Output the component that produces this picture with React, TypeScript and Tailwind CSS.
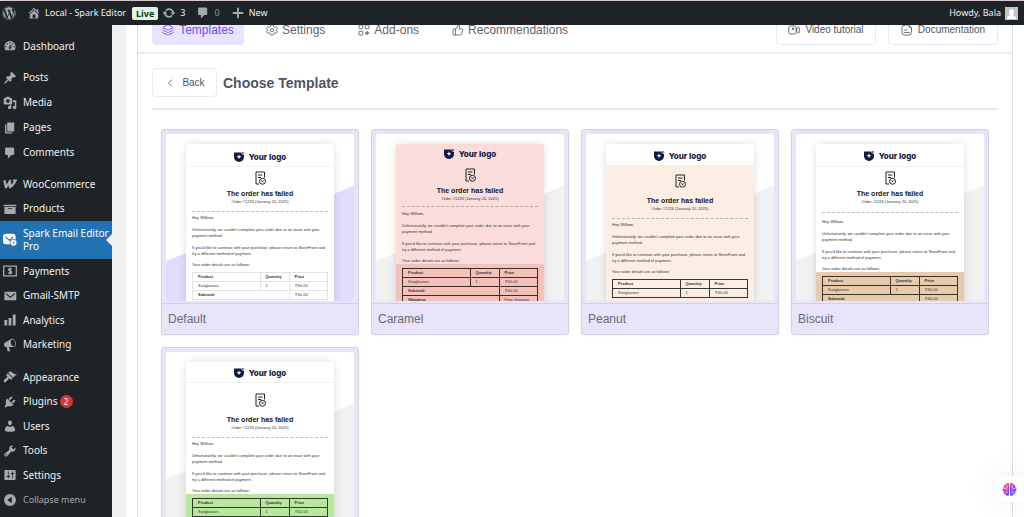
import { ReactNode } from "react";
import { ChevronLeft, Layers, ThumbsUp } from "lucide-react";
import { FaWordpress } from "react-icons/fa";

const paths = {
  dashboard:
    "M3.76 16h12.48c1.1-1.37 1.76-3.11 1.76-5 0-4.42-3.58-8-8-8s-8 3.58-8 8c0 1.89.66 3.63 1.76 5zM10 4c.55 0 1 .45 1 1s-.45 1-1 1-1-.45-1-1 .45-1 1-1zM6 6c.55 0 1 .45 1 1s-.45 1-1 1-1-.45-1-1 .45-1 1-1zm8 0c.55 0 1 .45 1 1s-.45 1-1 1-1-.45-1-1 .45-1 1-1zm-5.37 5.55L12 7v6c0 1.1-.9 2-2 2s-2-.9-2-2c0-.57.24-1.08.63-1.45zM4 10c.55 0 1 .45 1 1s-.45 1-1 1-1-.45-1-1 .45-1 1-1zm12 0c.55 0 1 .45 1 1s-.45 1-1 1-1-.45-1-1 .45-1 1-1zm-5 3c0-.55-.45-1-1-1s-1 .45-1 1 .45 1 1 1 1-.45 1-1z",
  pin: "M10.44 3.02l1.82-1.82 6.36 6.35-1.83 1.82c-1.05-.68-2.48-.57-3.41.36l-.75.75c-.92.93-1.04 2.35-.35 3.41l-1.83 1.82-2.41-2.41-2.8 2.79c-.42.42-3.38 2.71-3.8 2.29s1.86-3.39 2.28-3.81l2.79-2.79L4.1 9.36l1.83-1.82c1.05.69 2.48.57 3.4-.36l.75-.75c.93-.92 1.05-2.35.36-3.41z",
  media:
    "M13 11V4c0-.55-.45-1-1-1h-1.67L9 1H5L3.67 3H2c-.55 0-1 .45-1 1v7c0 .55.45 1 1 1h10c.55 0 1-.45 1-1zM7 4.5c1.38 0 2.5 1.12 2.5 2.5S8.38 9.5 7 9.5 4.5 8.38 4.5 7 5.62 4.5 7 4.5zM14 6h5v10.5c0 1.38-1.12 2.5-2.5 2.5S14 17.88 14 16.5s1.12-2.5 2.5-2.5c.17 0 .34.02.5.05V9h-3V6zm-4 8.05V13h2v3.5c0 1.38-1.12 2.5-2.5 2.5S7 17.88 7 16.5 8.12 14 9.5 14c.17 0 .34.02.5.05z",
  page: "M6 15V2h10v13H6zm-1 1h8v2H3V5h2v11z",
  comment:
    "M5 2h9c1.1 0 2 .9 2 2v7c0 1.1-.9 2-2 2h-2l-5 5v-5H5c-1.1 0-2-.9-2-2V4c0-1.1.9-2 2-2z",
  archive: "M19 4v2H1V4h18zM2 7h16v10H2V7zm11 3V9H7v1h6z",
  email:
    "M19 14.5v-9c0-.83-.67-1.5-1.5-1.5H3.49c-.83 0-1.5.67-1.5 1.5v9c0 .83.67 1.5 1.5 1.5H17.5c.83 0 1.5-.67 1.5-1.5zM4 5.6l6.5 5.2L17 5.6v2l-6.5 5.2L4 7.6z",
  chart: "M18 18V2h-4v16h4zm-6 0V7H8v11h4zm-6 0v-8H2v8h4z",
  megaphone:
    "M18.15 5.94c.46 1.62.38 3.22-.02 4.48-.42 1.28-1.26 2.18-2.3 2.48-.16.06-.26.06-.4.06-.06.02-.12.02-.18.02-.06.02-.14.02-.22.02h-6.8l2.22 5.5c.02.14-.06.26-.14.34-.08.1-.24.16-.34.16H6.95c-.1 0-.26-.06-.34-.16-.08-.08-.16-.2-.14-.34l-1-5.5H4.25l-.02-.02c-.5.06-1.08-.18-1.54-.62s-.88-1.08-1.06-1.88c-.24-.8-.2-1.56-.02-2.2.18-.62.58-1.08 1.06-1.3l.02-.02 9-5.4c.1-.06.18-.1.24-.16.06-.04.14-.08.24-.12.16-.08.28-.12.5-.18 1.04-.3 2.24.1 3.22.98s1.84 2.24 2.26 3.86zm-2.58 5.98h-.02c.4-.1.74-.34 1.04-.7.58-.7.86-1.76.86-3.04 0-.64-.1-1.3-.28-1.98-.34-1.36-1.02-2.5-1.78-3.24s-1.68-1.1-2.46-.88c-.82.22-1.4.96-1.7 2-.32 1.04-.28 2.36.06 3.72.38 1.36 1 2.5 1.8 3.24.78.74 1.62 1.1 2.48.88z",
  appearance:
    "M14.48 11.06L7.41 3.99l1.5-1.5c.5-.56 2.3-.47 3.51.32 1.21.8 1.43 1.28 2.91 2.1 1.18.64 2.45 1.26 4.45.85zm-.71.71L6.7 4.7 4.93 6.47c-.39.39-.39 1.02 0 1.41l1.06 1.06c.39.39.39 1.03 0 1.42-.6.6-1.43 1.11-2.21 1.69-.35.26-.7.53-1.01.84C1.43 14.23.4 16.08 1.4 17.07c.99 1 2.84-.03 4.18-1.36.31-.31.58-.66.85-1.02.57-.78 1.08-1.61 1.69-2.21.39-.39 1.02-.39 1.41 0l1.06 1.06c.39.39 1.02.39 1.41 0z",
  plugins:
    "M13.11 4.36L9.87 7.6 8 5.73l3.24-3.24c.35-.34 1.05-.2 1.56.32.52.51.66 1.21.31 1.55zm-8 1.77l.91-1.12 9.01 9.01-1.19.84c-.71.71-2.63 1.16-3.82 1.16H6.14L4.9 17.26c-.59.59-1.54.59-2.12 0-.59-.58-.59-1.53 0-2.12l1.24-1.24v-3.88c0-1.13.4-3.19 1.09-3.89zm7.26 3.97l3.24-3.24c.34-.35 1.04-.21 1.55.31.52.51.66 1.21.31 1.55l-3.24 3.25z",
  users:
    "M10 9.25c-2.27 0-2.73-3.44-2.73-3.44C7 4.02 7.82 2 9.97 2c2.16 0 2.98 2.02 2.71 3.81 0 0-.41 3.44-2.68 3.44zm0 2.57L12.72 10c2.39 0 4.52 2.33 4.52 4.53v2.49s-3.65 1.13-7.24 1.13c-3.65 0-7.24-1.13-7.24-1.13v-2.49c0-2.25 1.94-4.48 4.47-4.48z",
  tools:
    "M16.68 9.77c-1.34 1.34-3.3 1.67-4.95.99l-5.41 6.52c-.99.99-2.59.99-3.58 0s-.99-2.59 0-3.57l6.52-5.42c-.68-1.65-.35-3.61.99-4.95 1.28-1.28 3.12-1.62 4.72-1.06l-2.89 2.89 2.82 2.82 2.86-2.87c.53 1.58.18 3.39-1.08 4.65zM3.81 16.21c.4.39 1.04.39 1.43 0 .4-.4.4-1.04 0-1.43-.39-.4-1.03-.4-1.43 0-.39.39-.39 1.03 0 1.43z",
  settings:
    "M18 16V4c0-.55-.45-1-1-1H3c-.55 0-1 .45-1 1v12c0 .55.45 1 1 1h14c.55 0 1-.45 1-1zM8 11h1c.55 0 1 .45 1 1s-.45 1-1 1H8v1.5c0 .28-.22.5-.5.5s-.5-.22-.5-.5V13H6c-.55 0-1-.45-1-1s.45-1 1-1h1V5.5c0-.28.22-.5.5-.5s.5.22.5.5V11zm5-2h-1c-.55 0-1-.45-1-1s.45-1 1-1h1V5.5c0-.28.22-.5.5-.5s.5.22.5.5V7h1c.55 0 1 .45 1 1s-.45 1-1 1h-1v5.5c0 .28-.22.5-.5.5s-.5-.22-.5-.5V9z",
  collapse: "M10 1.5a8.5 8.5 0 1 0 0 17a8.5 8.5 0 1 0 0-17zM12.5 5.5v9L6 10z",
  home: "M16 8.5l1.53 1.53-1.06 1.06L10 4.6l-6.47 6.49-1.06-1.06L10 2.5l4 4v-2h2v4zm-6-2.46l6 5.99V18H4v-5.97zM12 17v-5H8v5h4z",
  update:
    "M10.2 3.28c3.53 0 6.43 2.61 6.92 6h2.08l-3.5 4-3.5-4h2.32c-.45-1.97-2.21-3.45-4.32-3.45-1.45 0-2.73.71-3.54 1.78L4.95 5.66C6.23 4.2 8.11 3.28 10.2 3.28zm-.4 13.44c-3.52 0-6.43-2.61-6.92-6H.8l3.5-4c1.17 1.33 2.33 2.67 3.5 4H5.48c.45 1.97 2.21 3.45 4.32 3.45 1.45 0 2.73-.71 3.54-1.78l1.71 1.95c-1.28 1.46-3.15 2.38-5.25 2.38z",
  plus: "M17.5 8.7v2.6h-6.2v6.2H8.7v-6.2H2.5V8.7h6.2V2.5h2.6v6.2z",
};

function Dash({ name }: { name: keyof typeof paths }) {
  return (
    <svg viewBox="0 0 20 20" className="size-3.5 shrink-0" fill="currentColor" fillRule="evenodd" aria-hidden="true">
      <path d={paths[name]} />
    </svg>
  );
}

function WooIcon() {
  return (
    <svg viewBox="0 0 20 20" className="size-3.5 shrink-0" fill="none" stroke="currentColor" strokeWidth="3.4" strokeLinejoin="round" aria-hidden="true">
      <path d="M2 4.500L4.200 14.500C6.500 12.500 8.500 9 10 5.500V14.500C13.500 12.500 16 9 18 4.500" />
      <path d="M14 4.500H20" strokeWidth="2" />
    </svg>
  );
}

function SparkIcon() {
  return (
    <svg viewBox="0 0 20 20" className="size-3.5 shrink-0" fill="none" aria-hidden="true">
      <rect x="0" y="1" width="18" height="15" rx="4" fill="#fff" />
      <path d="M4 6l5 4.500 5-4.500" stroke="#2271b1" strokeWidth="1.6" strokeLinecap="round" strokeLinejoin="round" />
      <circle cx="15" cy="14" r="5" fill="#fff" stroke="#2271b1" strokeWidth="1.2" />
      <path d="M16.500 11.500l-3.500 2.600h2l-1 2.400 3.300-3h-2z" fill="#2271b1" />
    </svg>
  );
}

function PaymentsIcon() {
  return (
    <svg viewBox="0 0 20 20" className="size-3.5 shrink-0" fill="none" stroke="currentColor" strokeWidth="1.8" aria-hidden="true">
      <rect x="1" y="3" width="18" height="14" />
      <path d="M12.500 7.500c-1-1.200-4.500-1.200-4.500.6 0 2 4.500 1.500 4.500 3.700 0 1.900-4 1.900-5 .5M10.200 5v10" />
    </svg>
  );
}

function MenuItem({ icon, label, badge, muted }: { icon: ReactNode; label: string; badge?: string; muted?: boolean }) {
  return (
    <li className="flex">
      <a href="#" className={`flex flex-1 items-center gap-1.5 pl-[3px] ${muted ? "text-[9px] text-[#a7aaad]" : "text-[#f0f0f1]"}`}>
        <span className="text-[#a7aaad]">{icon}</span>
        <span>{label}</span>
        {badge && (
          <span className="-ml-1 flex size-[13px] items-center justify-center rounded-full bg-[#d63638] text-[8px] text-white">
            {badge}
          </span>
        )}
      </a>
    </li>
  );
}

function Sidebar() {
  return (
    <nav aria-label="Admin menu" className="relative w-28 shrink-0 bg-[#1d2327] pt-[9px] font-['Noto_Sans','Open_Sans',sans-serif] text-[10px] leading-[13px]">
      <ul className="grid h-6 auto-rows-fr">
        <MenuItem icon={<Dash name="dashboard" />} label="Dashboard" />
      </ul>
      <ul className="mt-[7px] grid h-[100px] auto-rows-fr">
        <MenuItem icon={<Dash name="pin" />} label="Posts" />
        <MenuItem icon={<Dash name="media" />} label="Media" />
        <MenuItem icon={<Dash name="page" />} label="Pages" />
        <MenuItem icon={<Dash name="comment" />} label="Comments" />
      </ul>
      <ul className="mt-[7px] grid h-[49px] auto-rows-fr">
        <MenuItem icon={<WooIcon />} label="WooCommerce" />
        <MenuItem icon={<Dash name="archive" />} label="Products" />
      </ul>
      <a href="#" aria-current="page" className="relative flex h-[38px] items-center gap-1.5 bg-[#2271b1] pl-[3px] text-white">
        <SparkIcon />
        <span>
          Spark Email Editor
          <br />
          Pro
        </span>
        <span className="absolute top-1/2 right-0 -mt-[6px] border-y-6 border-r-6 border-y-transparent border-r-[#f0f0f1]" />
      </a>
      <ul className="grid h-[98px] auto-rows-fr">
        <MenuItem icon={<PaymentsIcon />} label="Payments" />
        <MenuItem icon={<Dash name="email" />} label="Gmail-SMTP" />
        <MenuItem icon={<Dash name="chart" />} label="Analytics" />
        <MenuItem icon={<Dash name="megaphone" />} label="Marketing" />
      </ul>
      <ul className="mt-2 grid h-[147px] auto-rows-fr">
        <MenuItem icon={<Dash name="appearance" />} label="Appearance" />
        <MenuItem icon={<Dash name="plugins" />} label="Plugins" badge="2" />
        <MenuItem icon={<Dash name="users" />} label="Users" />
        <MenuItem icon={<Dash name="tools" />} label="Tools" />
        <MenuItem icon={<Dash name="settings" />} label="Settings" />
        <MenuItem icon={<Dash name="collapse" />} label="Collapse menu" muted />
      </ul>
    </nav>
  );
}

function TopBar() {
  return (
    <header className="relative z-10 flex h-[25px] shrink-0 items-center border-t border-[#d9c9cd] bg-[#1d2327] pr-1.5 pl-0.5 font-['Noto_Sans','Open_Sans',sans-serif] text-[9px] text-[#f0f0f1]">
      <a href="#" aria-label="WordPress" className="text-[#a7aaad]">
        <FaWordpress className="size-3.5" />
      </a>
      <a href="#" className="ml-[11px] flex items-center gap-1">
        <span className="text-[#a7aaad]"><Dash name="home" /></span>
        Local - Spark Editor
      </a>
      <span className="ml-1.5 rounded-xs bg-[#e6f2e8] px-1 text-[9px] leading-[13px] font-bold text-[#00450c]">Live</span>
      <a href="#" className="ml-1 flex items-center gap-1">
        <span className="text-[#a7aaad]"><Dash name="update" /></span>3
      </a>
      <a href="#" className="ml-[11px] flex items-center gap-1 text-[#8c8f94]">
        <span className="text-[#a7aaad]"><Dash name="comment" /></span>0
      </a>
      <a href="#" className="ml-[11px] flex items-center gap-1">
        <span className="text-[#a7aaad]"><Dash name="plus" /></span>New
      </a>
      <a href="#" className="ml-auto flex items-center gap-1">
        Howdy, Bala
        <svg viewBox="0 0 13 13" className="size-[13px]" aria-hidden="true">
          <rect width="13" height="13" fill="#c3c4c7" />
          <path d="M6.500 2.200c1.700 0 2.700 1.200 2.600 2.900-.1 1.300-.7 2.100-1.200 2.600.2 1 3.100 1 3.300 4.300H1.800c.2-3.300 3.100-3.300 3.300-4.300-.5-.5-1.100-1.300-1.200-2.600-.1-1.700.9-2.900 2.600-2.900z" fill="#fff" />
        </svg>
      </a>
    </header>
  );
}

function GearIcon() {
  return (
    <svg viewBox="0 0 24 24" className="size-3" fill="none" stroke="currentColor" strokeWidth="1.7" strokeLinejoin="round" aria-hidden="true">
      <path d="M9.500 2h5l.8 3 2.200 1.200 3-.8 2.400 4.200-2.200 2.400 2.200 2.400-2.400 4.200-3-.8-2.200 1.200-.8 3h-5l-.8-3-2.200-1.200-3 .8L1.100 14.400 3.300 12 1.100 9.600l2.400-4.200 3 .8L8.700 5z" />
      <circle cx="12" cy="12" r="3.5" />
    </svg>
  );
}

function AddonsIcon() {
  return (
    <svg viewBox="0 0 24 24" className="size-3" fill="none" stroke="currentColor" strokeWidth="1.8" aria-hidden="true">
      <rect x="2" y="2" width="7.500" height="7.500" rx="1" />
      <rect x="14.500" y="2" width="7.500" height="7.500" rx="1" />
      <rect x="2" y="14.500" width="7.500" height="7.500" rx="1" />
      <path d="M18.200 14v8.500M14 18.200h8.500" strokeWidth="2.200" />
    </svg>
  );
}

function VideoIcon() {
  return (
    <svg viewBox="0 0 24 24" className="size-3" fill="none" stroke="currentColor" strokeWidth="1.7" strokeLinejoin="round" aria-hidden="true">
      <rect x="1.500" y="4" width="15" height="16" rx="4" />
      <path d="M16.500 10l4-3.500q2-1 2 1v9q0 2-2 1l-4-3.500z" />
      <circle cx="10" cy="9.500" r="1.600" fill="currentColor" />
    </svg>
  );
}

function DocIcon() {
  return (
    <svg viewBox="0 0 24 24" className="size-3" fill="none" stroke="currentColor" strokeWidth="1.7" strokeLinecap="round" strokeLinejoin="round" aria-hidden="true">
      <path d="M7 2h8l6 6v9q0 5-5 5H7q-5 0-5-5V7q0-5 5-5z" />
      <path d="M15 2q0 6 6 6M7 12h5M7 17h10" />
    </svg>
  );
}

function TabBar() {
  return (
    <div className="-mt-[10px] flex items-center justify-between border-b-2 border-[#ececee] px-[14px] pb-[7px] text-xs text-[#5f6470]">
      <div className="flex">
        <button type="button" className="flex h-[30px] w-[92px] items-center justify-center gap-[5px] rounded-sm bg-[#e9e4fd] text-[#6f4ff2]">
          <Layers className="size-3" strokeWidth={1.7} />
          Templates
        </button>
        <button type="button" className="ml-[22px] flex h-[30px] items-center gap-1">
          <GearIcon />
          Settings
        </button>
        <button type="button" className="ml-[33px] flex h-[30px] items-center gap-1">
          <AddonsIcon />
          Add-ons
        </button>
        <button type="button" className="ml-[33px] flex h-[30px] items-center gap-1">
          <ThumbsUp className="size-3" strokeWidth={1.7} />
          Recommendations
        </button>
      </div>
      <div className="flex gap-3 text-[10px] text-[#50555f]">
        <button type="button" className="flex h-[30px] w-[100px] items-center justify-center gap-[5px] rounded-sm border border-[#e6eaf3]">
          <VideoIcon />
          Video tutorial
        </button>
        <button type="button" className="flex h-[30px] w-[110px] items-center justify-center gap-[5px] rounded-sm border border-[#e6eaf3]">
          <DocIcon />
          Documentation
        </button>
      </div>
    </div>
  );
}

type Theme = {
  name: string;
  shape: string;
  paper: string;
  header: string;
  icon: string;
  title: string;
  rule: string;
  body: string;
  order: string;
  line: string;
  summaryRows: number;
};

const themes: Theme[] = [
  { name: "Default", shape: "#e2dcfd", paper: "bg-white", header: "h-[23px] pt-1 border-b border-[#f3f3f3]", icon: "mt-1", title: "mt-1", rule: "mt-[6px]", body: "pt-[3px]", order: "bg-white pt-1", line: "border-[#e3e3e3]", summaryRows: 1 },
  { name: "Caramel", shape: "#f1f1f1", paper: "bg-[#fbdedb]", header: "h-5", icon: "mt-1", title: "mt-1", rule: "mt-1", body: "pt-1", order: "bg-[#f3c0ba] pt-1", line: "border-[#3b2c2a]", summaryRows: 2 },
  { name: "Peanut", shape: "#f1f1f1", paper: "bg-[#fceee3]", header: "h-[21px] bg-white pt-0.5", icon: "mt-[9px]", title: "mt-2", rule: "mt-[6px]", body: "pt-[3px]", order: "bg-[#fceee3] pt-1", line: "border-[#3a3632]", summaryRows: 0 },
  { name: "Biscuit", shape: "#f1f1f1", paper: "bg-white", header: "h-[23px] pt-0.5 border-b border-[#f0f0f0]", icon: "mt-1", title: "mt-1", rule: "mt-[7px]", body: "pt-[6px]", order: "bg-[#e8cbad] pt-1", line: "border-[#3a3128]", summaryRows: 1 },
  { name: "Pistachio", shape: "#f1f1f1", paper: "bg-white", header: "h-[21px] pt-px border-b border-[#f0f0f0]", icon: "mt-[10px]", title: "mt-2", rule: "mt-[6px]", body: "pt-[3px]", order: "bg-[#b9e79e] pt-1", line: "border-[#2f3a29]", summaryRows: 0 },
];

const summary = [
  { label: "Subtotal:", value: "₹ 60.00" },
  { label: "Shipping:", value: "Free shipping" },
];

function BrandMark() {
  return (
    <svg viewBox="0 0 22 20" className="h-[10px] w-[11px]" aria-hidden="true">
      <path d="M0 1h14q1 4 6 5v4a10 10 0 0 1-20 0z" fill="#101b42" />
      <path d="M17.500 0v4M15.500 2h5" stroke="#101b42" strokeWidth="1.3" />
      <path d="M10 4.500l1.300 3.700 3.700 1.300-3.700 1.300L10 14.500l-1.300-3.700L5 9.500l3.700-1.300z" fill="#fff" />
    </svg>
  );
}

function ReceiptIcon() {
  return (
    <svg viewBox="0 0 22 28" className="h-3.5 w-[11px]" fill="none" stroke="#222" strokeWidth="2" aria-hidden="true">
      <path d="M8 26H2V2h17v11M6 8h9M6 13h6" />
      <circle cx="15" cy="20.500" r="6" />
      <path d="M13 18.500l4 4M17 18.500l-4 4" strokeWidth="1.6" />
    </svg>
  );
}

function EmailPreview({ theme }: { theme: Theme }) {
  const cell = `border ${theme.line} h-[9px] px-[5px] py-0 text-left leading-[6px]`;
  return (
    <div className={`relative mx-5 mt-[10px] h-[170px] rounded-xs text-[4px] leading-[6px] text-[#333] shadow-[0_0_8px_rgba(0,0,0,0.13)] ${theme.paper}`}>
      <div className={`flex items-center justify-center gap-1 rounded-t-xs ${theme.header}`}>
        <BrandMark />
        <span className="font-[Inter,sans-serif] text-[8px] leading-[10px] font-extrabold text-[#101b42]">Your logo</span>
      </div>
      <div className={`flex justify-center ${theme.icon}`}>
        <ReceiptIcon />
      </div>
      <div className={`text-center text-[7px] leading-[10px] font-bold text-[#151515] ${theme.title}`}>The order has failed</div>
      <div className="text-center">Order #1226 (January 20, 2025)</div>
      <div className={`mx-[6px] border-t border-dashed border-black/25 ${theme.rule}`} />
      <div className={`px-[6px] whitespace-nowrap ${theme.body}`}>
        <p>Hey William,</p>
        <p className="mt-[6px]">
          Unfortunately, we couldn't complete your order due to an issue with your
          <br />
          payment method.
        </p>
        <p className="mt-[6px]">
          If you'd like to continue with your purchase, please return to StoreFront and
          <br />
          try a different method of payment.
        </p>
        <p className="mt-[5px]">Your order details are as follows:</p>
      </div>
      <div className={`px-[6px] pb-3 ${theme.order}`}>
        <table className="w-full table-fixed border-collapse">
          <colgroup>
            <col className="w-1/2" />
            <col className="w-[29px]" />
            <col />
          </colgroup>
          <thead>
            <tr>
              <th className={cell}>Product</th>
              <th className={cell}>Quantity</th>
              <th className={cell}>Price</th>
            </tr>
          </thead>
          <tbody>
            <tr>
              <td className={cell}>Sunglasses</td>
              <td className={cell}>1</td>
              <td className={cell}>₹ 60.00</td>
            </tr>
            {summary.slice(0, theme.summaryRows).map((row) => (
              <tr key={row.label}>
                <th className={cell} colSpan={2}>{row.label}</th>
                <td className={cell}>{row.value}</td>
              </tr>
            ))}
          </tbody>
        </table>
      </div>
    </div>
  );
}

function TemplateCard({ theme }: { theme: Theme }) {
  return (
    <button type="button" className="block rounded-[3px] border border-[#d3d3dc] bg-[#e9e4fb] text-left shadow-xs">
      <div className="p-1 pb-0.5">
        <div className="relative h-[167px] overflow-hidden rounded-[3px] bg-white">
          <svg viewBox="0 0 100 100" preserveAspectRatio="none" className="absolute inset-0 h-full w-full" aria-hidden="true">
            <path d="M0 76L100 31V100H0z" fill={theme.shape} />
          </svg>
          <EmailPreview theme={theme} />
        </div>
      </div>
      <div className="border-t border-[#d3d3dc] px-[6px] py-[7px] text-xs leading-4 text-[#666b76]">{theme.name}</div>
    </button>
  );
}

function BrainButton() {
  return (
    <button type="button" aria-label="Assistant" className="absolute right-0 bottom-[15px] flex h-[26px] w-[29px] items-center justify-center rounded-l-full bg-white shadow-[0_0_30px_rgba(0,0,0,0.1)]">
      <svg viewBox="0 0 30 30" className="size-[15px]" aria-hidden="true">
        <defs>
          <linearGradient id="brain" x1="0" y1="0" x2="1" y2="1">
            <stop offset="0" stopColor="#ff8a3c" />
            <stop offset="0.3" stopColor="#e0479e" />
            <stop offset="0.6" stopColor="#7a4df0" />
            <stop offset="1" stopColor="#3f8cf5" />
          </linearGradient>
        </defs>
        <path d="M14 3v24c-3 2-6 0-6.500-2C4 25 2.500 22 3.500 19.500 0 17.500 0 12.500 3.500 10.500 3 7 5 4.500 8 4.500c1-2.500 4-3 6-1.500zM16 3v24c3 2 6 0 6.500-2 3.500 0 5-3 4-5.500 3.500-2 3.500-7 0-9 .5-3.500-1.500-6-4.500-6-1-2.500-4-3-6-1.500z" fill="url(#brain)" />
        <path d="M4 13c3-1 5 0 6 2M10 7v4M7 21c1-2 3-2 4-1M26 13c-3-1-5 0-6 2M20 7v4M23 21c-1-2-3-2-4-1" stroke="#fff" strokeWidth="1.4" fill="none" strokeLinecap="round" />
      </svg>
    </button>
  );
}

export default function App() {
  return (
    <div className="relative flex h-screen flex-col overflow-hidden bg-white font-['Liberation_Sans',Arial,sans-serif]">
      <TopBar />
      <div className="flex min-h-0 flex-1">
        <Sidebar />
        <div className="w-3.5 shrink-0 bg-[#f0f0f1]" />
        <main className="mr-[11px] ml-[11px] min-w-0 flex-1 border-x border-[#dcdfe6]">
          <TabBar />
          <div className="mx-[14px] flex items-center gap-[6px] border-b-2 border-[#e9ebef] pt-[14px] pb-[11px]">
            <button type="button" className="flex h-[29px] w-[65px] items-center justify-center gap-[6px] rounded-sm border border-[#e6eaf3] text-[10px] text-[#50555f]">
              <ChevronLeft className="size-3" strokeWidth={1.7} />
              Back
            </button>
            <h1 className="text-sm font-bold text-[#50555f]">Choose Template</h1>
          </div>
          <div className="grid grid-cols-4 gap-3 px-[23px] pt-[19px]">
            {themes.map((theme) => (
              <TemplateCard key={theme.name} theme={theme} />
            ))}
          </div>
        </main>
      </div>
      <BrainButton />
    </div>
  );
}
